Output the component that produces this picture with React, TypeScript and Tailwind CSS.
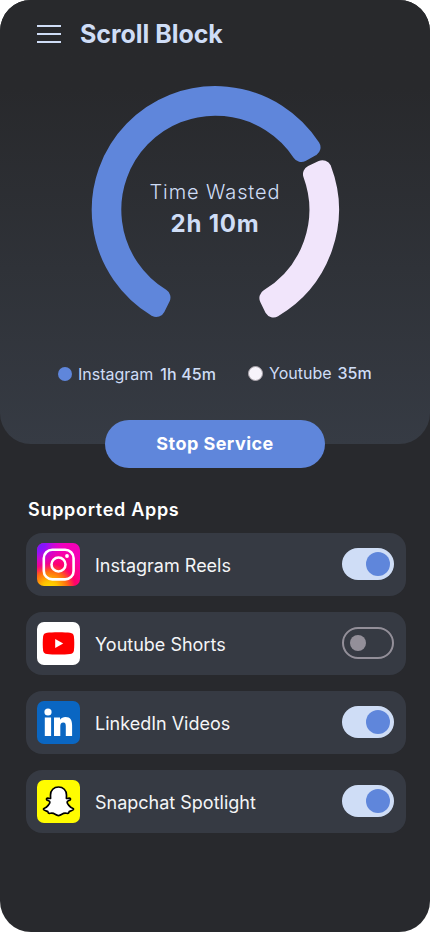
import type { ReactNode } from "react";

const CX = 215.3;
const CY = 209.7;
const OUTER = 123.6;
const INNER = 94;
const CORNER = 9;

// Outline of a ring segment pulled in by CORNER; a round-joined stroke gives back the soft corners.
function segment(from: number, to: number) {
  const ro = OUTER - CORNER;
  const ri = INNER + CORNER;
  const rad = Math.PI / 180;
  const a = from * rad;
  const b = to * rad;
  const po = Math.asin(CORNER / ro);
  const pi = Math.asin(CORNER / ri);
  const at = (r: number, t: number) =>
    `${(CX + r * Math.cos(t)).toFixed(2)} ${(CY + r * Math.sin(t)).toFixed(2)}`;
  const large = to - from > 180 ? 1 : 0;
  return `M${at(ro, a + po)}A${ro} ${ro} 0 ${large} 1 ${at(ro, b - po)}L${at(ri, b - pi)}A${ri} ${ri} 0 ${large} 0 ${at(ri, a + pi)}Z`;
}

function Toggle({ on }: { on: boolean }) {
  return on ? (
    <div className="mb-0.5 flex h-8 w-[52px] items-center justify-end rounded-full bg-[#cfddf6] pr-1">
      <div className="size-6 rounded-full bg-[#5f86db]" />
    </div>
  ) : (
    <div className="mb-0.5 flex h-8 w-[52px] items-center rounded-full border-2 border-[#938f99] pl-1.5">
      <div className="size-4 rounded-full bg-[#938f99]" />
    </div>
  );
}

function InstagramLogo() {
  return (
    <svg viewBox="0 0 43 43" className="size-[43px]">
      <defs>
        <radialGradient id="warm" cx="0.3" cy="1.08" r="1">
          <stop offset="0.08" stopColor="#ffd600" />
          <stop offset="0.2" stopColor="#ffc000" />
          <stop offset="0.42" stopColor="#ff6a12" />
          <stop offset="0.6" stopColor="#ff0169" />
          <stop offset="0.85" stopColor="#fc00a0" />
          <stop offset="1" stopColor="#f400b8" />
        </radialGradient>
        <radialGradient id="cool" cx="0" cy="0" r="0.7">
          <stop offset="0" stopColor="#6a1cff" />
          <stop offset="0.3" stopColor="#8f12fa" />
          <stop offset="1" stopColor="#f000d0" stopOpacity="0" />
        </radialGradient>
      </defs>
      <rect width="43" height="43" rx="7" fill="url(#warm)" />
      <rect width="43" height="43" rx="7" fill="url(#cool)" />
      <g fill="none" stroke="#fff" strokeWidth="2.6">
        <rect x="6.8" y="6.8" width="29.800" height="29.600" rx="8.500" />
        <circle cx="21.500" cy="21.500" r="7" />
      </g>
      <circle cx="30" cy="13" r="1.900" fill="#fff" />
    </svg>
  );
}

function YoutubeLogo() {
  return (
    <svg viewBox="0 0 43 43" className="size-[43px]">
      <rect width="43" height="43" rx="7" fill="#fff" />
      <path
        fill="#f00"
        d="M21.5 10.3c5 0 9 .2 11.500.5 2.300.3 3.600 1.400 3.900 3.700.5 4.500.5 9.500 0 14-.3 2.200-1.600 3.200-3.900 3.500-6 .7-17 .7-23 0-2.300-.3-3.600-1.300-3.900-3.500-.5-4.500-.5-9.500 0-14 .3-2.300 1.600-3.400 3.900-3.700 2.500-.3 6.500-.5 11.500-.5z"
      />
      <path fill="#fff" d="M18.200 16.900v9.200l8-4.600z" />
    </svg>
  );
}

function LinkedInLogo() {
  return (
    <svg viewBox="0 0 43 43" className="size-[43px]">
      <rect width="43" height="43" rx="7" fill="#0a66c2" />
      <g fill="#fff">
        <circle cx="11" cy="11" r="3.600" />
        <path d="M7.800 16.500h6.300V35H7.800zM17 16.500h6v2.300c1.200-1.900 3.300-2.800 5.400-2.800 5.200 0 6.700 3.500 6.700 8.200V35h-6.300v-9.700c0-2.300-.4-3.800-2.500-3.800-2.200 0-3 1.600-3 3.800V35H17z" />
      </g>
    </svg>
  );
}

function SnapchatLogo() {
  return (
    <svg viewBox="0 0 43 43" className="size-[43px]">
      <rect width="43" height="43" rx="7" fill="#fffc00" />
      <path
        fill="#fff"
        stroke="#000"
        strokeWidth="1.700"
        strokeLinejoin="round"
        d="M21.500 7c-4.700 0-8 3.300-8 8 0 1.200 0 2.300.1 3.400-.9.400-2-.3-2.900-.3-1 0-1.600 1-.9 1.700.8.800 3 .9 3.100 2.200.1 1.600-2.900 5.300-5.500 6.200-.9.300-1.100 1-.6 1.600.9 1 2.700 1.200 3.800 1.600.5.200.4 1.500 1.100 1.800 1.200.4 3-.5 4.800.2 1.700.7 2.700 2.200 5 2.200s3.300-1.500 5-2.200c1.800-.7 3.600.2 4.800-.2.700-.3.600-1.600 1.100-1.800 1.100-.4 2.900-.6 3.800-1.600.5-.6.3-1.300-.6-1.600-2.600-.9-5.600-4.600-5.500-6.200.1-1.300 2.300-1.400 3.100-2.200.7-.7.100-1.700-.9-1.700-.9 0-2 .7-2.900.3.100-1.100.1-2.200.1-3.400 0-4.700-3.300-8-8-8z"
      />
    </svg>
  );
}

function AppRow({ logo, name, on }: { logo: ReactNode; name: string; on: boolean }) {
  return (
    <li className="flex h-[63px] items-center rounded-[16px] bg-[#363a43] pr-3 pl-[11px]">
      {logo}
      <span className="ml-[15px] flex-1 pt-0.5 text-[18px] leading-[23px] text-[#f4f5f7]">{name}</span>
      <Toggle on={on} />
    </li>
  );
}

export default function App() {
  return (
    <div className="h-[932px] w-[430px] overflow-hidden rounded-[31px] bg-[#28292d] font-['Inter',sans-serif]">
      <header className="relative flex h-[444px] flex-col rounded-b-[31px] bg-linear-to-b from-[#28292c] from-20% to-[#363b44] text-[#cfddf6]">
        <div className="flex h-[68px] items-center pl-[37px]">
          <div className="flex flex-col gap-1.5">
            <span className="h-0.5 w-6 bg-current" />
            <span className="h-0.5 w-6 bg-current" />
            <span className="h-0.5 w-6 bg-current" />
          </div>
          <h1 className="ml-[19px] text-[25px] leading-8 font-bold tracking-[-0.04px]">Scroll Block</h1>
        </div>
        <div className="grid h-[268px] justify-items-center">
          <svg viewBox="80 68 270 268" className="col-start-1 row-start-1 h-[268px] w-[270px]" strokeWidth={CORNER * 2} strokeLinejoin="round">
            <path d={segment(116.5, 331.6)} fill="#5f86db" stroke="#5f86db" />
            <path d={segment(-25.2, 64)} fill="#f1e5fb" stroke="#f1e5fb" />
          </svg>
          <div className="col-start-1 row-start-1 flex flex-col items-center pt-[110px] text-center">
            <p className="text-[20px] leading-7 font-light tracking-[0.9px]">Time Wasted</p>
            <p className="mt-0.5 text-[24px] leading-8 font-bold tracking-[0.8px]">2h 10m</p>
          </div>
        </div>
        <div className="flex items-start pt-[28px] pl-[58px] text-[16px] leading-5">
          <div className="flex w-[190px] items-center">
            <span className="size-[14px] rounded-full bg-[#5f86db]" />
            <span className="ml-1.5">Instagram</span>
            <span className="ml-[7px] font-medium tracking-[0.1px]">1h 45m</span>
          </div>
          <div className="-mt-px flex items-center">
            <span className="size-[15px] rounded-full border border-[#a9a3aa] bg-[#f7f4fb]" />
            <span className="ml-1.5">Youtube</span>
            <span className="ml-[6px] font-medium">35m</span>
          </div>
        </div>
      </header>
      <button className="relative mx-auto -mt-6 block h-12 w-[220px] rounded-full bg-[#5f86db] pb-0.5 text-[18px] font-bold tracking-[0.45px] text-white">
        Stop Service
      </button>
      <main className="px-6 pt-[30px] pl-[26px]">
        <h2 className="ml-0.5 text-[18px] leading-6 font-semibold tracking-[0.7px] text-white">Supported Apps</h2>
        <ul className="mt-[11px] flex flex-col gap-4">
          <AppRow logo={<InstagramLogo />} name="Instagram Reels" on />
          <AppRow logo={<YoutubeLogo />} name="Youtube Shorts" on={false} />
          <AppRow logo={<LinkedInLogo />} name="LinkedIn Videos" on />
          <AppRow logo={<SnapchatLogo />} name="Snapchat Spotlight" on />
        </ul>
      </main>
    </div>
  );
}
